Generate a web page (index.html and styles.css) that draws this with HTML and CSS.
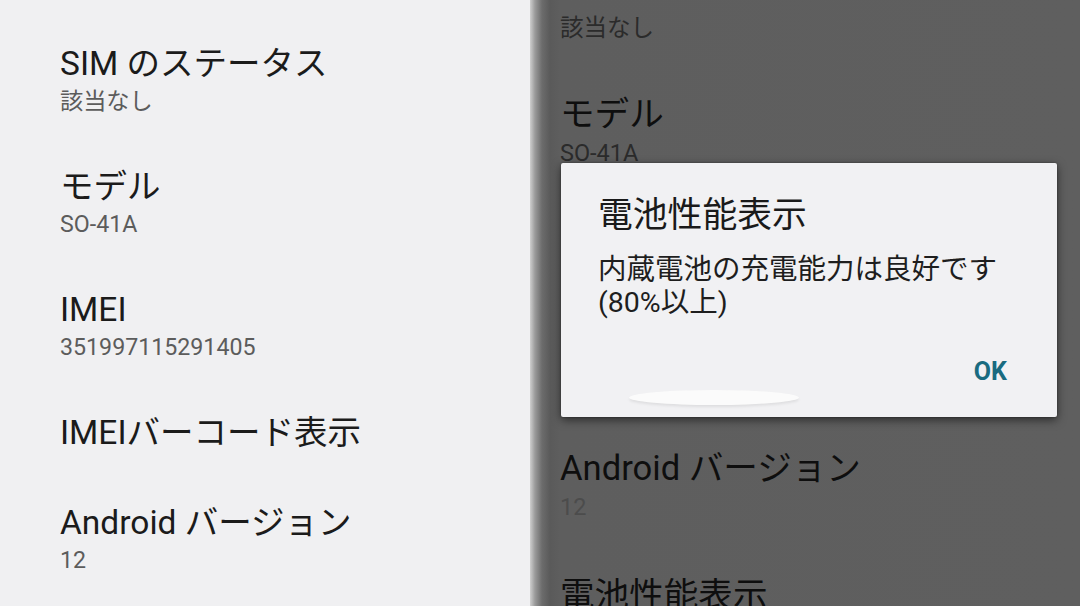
FILE: index.html
```html
<!DOCTYPE html>
<html lang="ja">
<head>
<meta charset="utf-8">
<title>端末情報</title>
<link rel="stylesheet" href="styles.css">
</head>
<body>
<div class="screen">
  <section class="pane pane-light">
    <div class="list">
      <div class="row">
        <div class="title">SIM のステータス</div>
        <div class="sub">該当なし</div>
      </div>
      <div class="row">
        <div class="title">モデル</div>
        <div class="sub">SO-41A</div>
      </div>
      <div class="row">
        <div class="title">IMEI</div>
        <div class="sub">351997115291405</div>
      </div>
      <div class="row">
        <div class="title">IMEIバーコード表示</div>
      </div>
      <div class="row">
        <div class="title">Android バージョン</div>
        <div class="sub">12</div>
      </div>
    </div>
  </section>

  <section class="pane pane-dim">
    <div class="list list-dim">
      <div class="row row-partial">
        <div class="sub">該当なし</div>
      </div>
      <div class="row">
        <div class="title">モデル</div>
        <div class="sub">SO-41A</div>
      </div>
      <div class="row row-covered">
        <div class="title">IMEI</div>
        <div class="sub">351997115291405</div>
      </div>
      <div class="row row-tall row-covered">
        <div class="title">IMEIバーコード表示</div>
      </div>
      <div class="row">
        <div class="title">Android バージョン</div>
        <div class="sub sub-faint">12</div>
      </div>
      <div class="row">
        <div class="title">電池性能表示</div>
      </div>
    </div>

    <div class="dialog">
      <div class="dialog-title">電池性能表示</div>
      <div class="dialog-body">内蔵電池の充電能力は良好です<br>(80%以上)</div>
      <div class="dialog-actions">
        <button class="dialog-btn" type="button">OK</button>
      </div>
      <span class="smudge"></span>
    </div>
  </section>
</div>
</body>
</html>
```

FILE: styles.css
```css
html, body {
  margin: 0;
  padding: 0;
}

body {
  width: 1080px;
  height: 606px;
  overflow: hidden;
  font-family: Roboto, "Noto Sans CJK JP", sans-serif;
  background: #f0f0f2;
}

.screen {
  display: grid;
  grid-template-columns: 530px 550px;
  height: 606px;
  overflow: hidden;
}

.pane {
  position: relative;
  overflow: hidden;
  height: 606px;
}

.pane-light {
  background: #f0f0f2;
}

.pane-dim {
  background: linear-gradient(to right, #cfcfcf 0px, #9a9a9a 5px, #6c6c6c 12px, #5a5a5a 20px, #5e5e5e 30px, #5f5f5f 100%);
}

/* ---------- list ---------- */
.list {
  padding: 19px 0 0 60px;
}

.row {
  padding: 25px 0;
}

.title {
  font-size: 33.5px;
  line-height: 40px;
  color: #1b1b1b;
  white-space: nowrap;
}

.sub {
  margin-top: 2px;
  font-size: 23.2px;
  line-height: 31px;
  color: #5c5c5c;
  white-space: nowrap;
}

.list-dim {
  padding: 10px 0 0 30px;
}

.list-dim .row {
  padding: 26px 0;
}

.list-dim .row-partial {
  padding: 0 0 24px;
}

.list-dim .row-tall {
  padding: 30px 0 29px;
}

.list-dim .row-covered {
  visibility: hidden;
}

.list-dim .title {
  font-size: 34.6px;
  line-height: 41px;
  color: #0e0e0e;
}

.list-dim .sub {
  font-size: 23.5px;
  line-height: 32px;
  color: #2b2b2b;
}

.list-dim .sub-faint {
  color: #4c4c4c;
}

/* ---------- dialog ---------- */
.dialog {
  position: absolute;
  left: 31px;
  top: 163px;
  width: 496px;
  box-sizing: border-box;
  padding: 32px 50px 30px 37px;
  background: #f1f1f3;
  border-radius: 2px;
  box-shadow: 0 3px 10px rgba(0, 0, 0, 0.55), 0 0 2px rgba(0, 0, 0, 0.4);
}

.dialog-title {
  font-size: 34.8px;
  line-height: 41px;
  color: #1a1a1a;
  white-space: nowrap;
}

.dialog-body {
  margin-top: 17px;
  font-size: 28.5px;
  line-height: 33px;
  color: #1e1e1e;
  white-space: nowrap;
}

.dialog-actions {
  display: flex;
  justify-content: flex-end;
  margin-top: 38px;
}

.dialog-btn {
  margin: 0;
  padding: 0;
  border: 0;
  background: none;
  font-family: Roboto, sans-serif;
  font-weight: 700;
  font-size: 25px;
  line-height: 30px;
  color: #196b80;
}

.smudge {
  position: absolute;
  left: 68px;
  top: 227px;
  width: 170px;
  height: 15px;
  border-radius: 50%;
  background: #fbfbfb;
  box-shadow: 0 2px 3px rgba(0, 0, 0, 0.08);
}
```
